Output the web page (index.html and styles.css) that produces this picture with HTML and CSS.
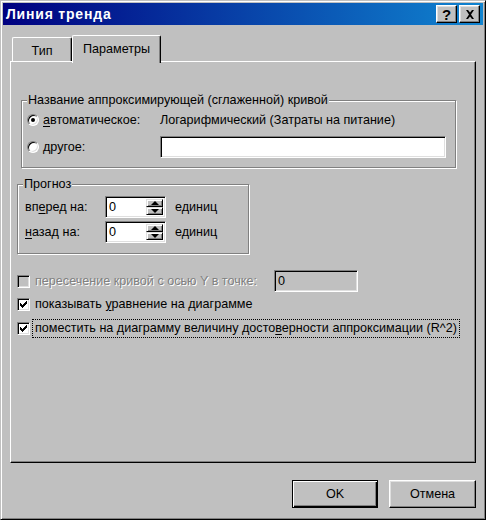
FILE: index.html
```html
<!DOCTYPE html>
<html lang="ru">
<head>
    <meta charset="UTF-8">
    <title>Линия тренда</title>
    <link rel="stylesheet" href="styles.css">
</head>
<body>
<div class="window">
    <div class="titlebar">
        <span class="title">Линия тренда</span>
        <div class="cap-buttons">
            <span class="cap-btn help">?</span>
            <span class="cap-btn">
                <svg width="10" height="9" viewBox="0 0 10 9"><path d="M1 0h2l2 2.5L7 0h2L6 4.5 9 9H7L5 6.5 3 9H1l3-4.5z" fill="#000"/></svg>
            </span>
        </div>
    </div>

    <div class="content">
        <div class="tabs">
            <div class="tab">Тип</div>
            <div class="tab active">Параметры</div>
        </div>

        <div class="panel">
            <fieldset class="group group-name">
                <legend>Название аппроксимирующей (сглаженной) кривой</legend>
                <div class="row">
                    <span class="radio checked"></span>
                    <span class="radio-label"><u>а</u>втоматическое:</span>
                    <span class="auto-name">Логарифмический (Затраты на питание)</span>
                </div>
                <div class="row">
                    <span class="radio"></span>
                    <span class="radio-label"><u>д</u>ругое:</span>
                    <span class="field name-field"></span>
                </div>
            </fieldset>

            <fieldset class="group group-forecast">
                <legend>Прогноз</legend>
                <div class="row">
                    <span class="spin-label">вп<u>е</u>ред на:</span>
                    <span class="spin">
                        <span class="spin-value">0</span>
                        <span class="spin-arrows">
                            <span class="arrow-btn"><span class="tri-up"></span></span>
                            <span class="arrow-btn"><span class="tri-down"></span></span>
                        </span>
                    </span>
                    <span class="units">единиц</span>
                </div>
                <div class="row">
                    <span class="spin-label"><u>н</u>азад на:</span>
                    <span class="spin">
                        <span class="spin-value">0</span>
                        <span class="spin-arrows">
                            <span class="arrow-btn"><span class="tri-up"></span></span>
                            <span class="arrow-btn"><span class="tri-down"></span></span>
                        </span>
                    </span>
                    <span class="units">единиц</span>
                </div>
            </fieldset>

            <div class="checks">
                <div class="check-row">
                    <span class="checkbox disabled"></span>
                    <span class="check-label disabled-text">пересечение кривой с осью Y в точке:</span>
                    <span class="field intercept">0</span>
                </div>
                <div class="check-row">
                    <span class="checkbox">
                        <svg width="7" height="7" viewBox="0 0 7 7"><path d="M0 2h1v3H0zM1 3h1v3H1zM2 4h1v3H2zM3 3h1v3H3zM4 2h1v3H4zM5 1h1v3H5zM6 0h1v3H6z" fill="#000"/></svg>
                    </span>
                    <span class="check-label">показывать <u>у</u>равнение на диаграмме</span>
                </div>
                <div class="check-row">
                    <span class="checkbox">
                        <svg width="7" height="7" viewBox="0 0 7 7"><path d="M0 2h1v3H0zM1 3h1v3H1zM2 4h1v3H2zM3 3h1v3H3zM4 2h1v3H4zM5 1h1v3H5zM6 0h1v3H6z" fill="#000"/></svg>
                    </span>
                    <span class="check-label focused">поместить на диаграмму величину досто<u>в</u>ерности аппроксимации (R^2)</span>
                </div>
            </div>
        </div>

        <div class="buttons">
            <span class="btn default">OK</span>
            <span class="btn">Отмена</span>
        </div>
    </div>
</div>
</body>
</html>
```

FILE: styles.css
```css
body {
    margin: 0;
    background: #c0c0c0;
    font-family: "Liberation Sans", Arial, sans-serif;
    font-size: 12.6px;
    color: #000;
}
u {
    text-underline-offset: 2px;
}
.window {
    width: 486px;
    height: 520px;
    box-sizing: border-box;
    border: 1px solid;
    border-color: #c0c0c0 #000 #000 #c0c0c0;
    box-shadow: inset 1px 1px #fff, inset -1px -1px #808080;
    padding: 2px;
    display: flex;
    flex-direction: column;
}

/* title bar */
.titlebar {
    height: 22px;
    flex: none;
    background: linear-gradient(to right, #000080, #1084d0);
    display: flex;
    align-items: center;
    justify-content: space-between;
    padding: 0 3px 0 3px;
}
.title {
    color: #fff;
    font-weight: bold;
    font-size: 14px;
    letter-spacing: 0.8px;
}
.cap-buttons {
    display: flex;
    gap: 2px;
}
.cap-btn {
    width: 21px;
    height: 18px;
    box-sizing: border-box;
    background: #c0c0c0;
    border: 1px solid;
    border-color: #fff #000 #000 #fff;
    box-shadow: inset -1px -1px #808080, inset 1px 1px #dfdfdf;
    display: flex;
    align-items: center;
    justify-content: center;
}
.cap-btn.help {
    font-weight: bold;
    font-size: 15px;
    line-height: 1;
}

/* body */
.content {
    flex: 1;
    padding: 10px 7px 0 7px;
    display: flex;
    flex-direction: column;
}
.tabs {
    display: flex;
    align-items: flex-end;
    height: 26px;
    padding-left: 2px;
    position: relative;
    z-index: 1;
}
.tab {
    height: 24px;
    box-sizing: border-box;
    width: 60px;
    border-top: 1px solid #fff;
    border-left: 1px solid #fff;
    border-right: 1px solid #000;
    border-radius: 2px 2px 0 0;
    box-shadow: inset -1px 0 #808080;
    background: #c0c0c0;
    display: flex;
    align-items: center;
    justify-content: center;
    padding-top: 3px;
}
.tab.active {
    width: 89px;
    height: 28px;
    margin-bottom: -2px;
    padding-top: 0;
    padding-bottom: 2px;
}
.panel {
    height: 402px;
    box-sizing: border-box;
    border: 1px solid;
    border-color: #fff #000 #000 #fff;
    box-shadow: inset -1px -1px #808080;
    padding: 0 6px;
}

/* group boxes */
.group {
    margin: 0;
    padding: 0;
    min-width: 0;
    border: 1px solid #808080;
    box-shadow: 1px 1px 0 #fff, inset 1px 1px 0 #fff;
    box-sizing: border-box;
}
.group legend {
    padding: 0 1px;
    margin-left: 0;
    line-height: 14px;
    background: #c0c0c0;
}
.group-name {
    width: 435px;
    margin: 31px 0 0 4px;
    padding: 2px 9px 9px 5px;
}
.group-forecast {
    width: 232px;
    margin: 9px 0 0 0;
    padding: 5px 0 10px 7px;
}
.group-forecast legend {
    margin-left: -2px;
}
.row {
    display: flex;
    align-items: center;
    height: 22px;
}
.group-name .row + .row {
    margin-top: 5px;
}
.group-forecast .row + .row {
    margin-top: 3px;
}

.radio {
    width: 12px;
    height: 12px;
    box-sizing: border-box;
    border-radius: 50%;
    border: 1px solid;
    border-color: #808080 #fff #fff #808080;
    box-shadow: inset 1px 1px #000, inset -1px -1px #dfdfdf;
    background: #fff;
    position: relative;
    flex: none;
}
.radio.checked::after {
    content: "";
    position: absolute;
    left: 3px;
    top: 3px;
    width: 4px;
    height: 4px;
    border-radius: 50%;
    background: #000;
}
.radio-label {
    margin-left: 4px;
    width: 117px;
}
.field {
    height: 22px;
    box-sizing: border-box;
    border: 1px solid;
    border-color: #808080 #fff #fff #808080;
    box-shadow: inset 1px 1px #000, inset -1px -1px #dfdfdf;
    background: #fff;
    padding: 3px 3px 0;
}
.name-field {
    width: 286px;
}

/* spin boxes */
.spin-label {
    width: 80px;
}
.spin {
    width: 61px;
    height: 22px;
    box-sizing: border-box;
    border: 1px solid;
    border-color: #808080 #fff #fff #808080;
    box-shadow: inset 1px 1px #000, inset -1px -1px #dfdfdf;
    background: #fff;
    padding: 2px;
    display: flex;
}
.spin-value {
    flex: 1;
    padding: 1px 0 0 1px;
}
.spin-arrows {
    display: flex;
    flex-direction: column;
    width: 17px;
}
.arrow-btn {
    flex: 1;
    box-sizing: border-box;
    background: #c0c0c0;
    border: 1px solid;
    border-color: #dfdfdf #000 #000 #dfdfdf;
    box-shadow: inset 1px 1px #fff, inset -1px -1px #808080;
    display: flex;
    align-items: center;
    justify-content: center;
}
.tri-up {
    border: 4px solid transparent;
    border-bottom: 4px solid #000;
    border-top: 0;
}
.tri-down {
    border: 4px solid transparent;
    border-top: 4px solid #000;
    border-bottom: 0;
}
.units {
    margin-left: 9px;
}

/* check boxes */
.checks {
    margin-top: 16px;
}
.check-row {
    display: flex;
    align-items: center;
    height: 22px;
    white-space: nowrap;
}
.check-row + .check-row {
    margin-top: 1px;
}
.check-row:last-child {
    margin-top: 2px;
}
.checkbox {
    width: 13px;
    height: 13px;
    box-sizing: border-box;
    border: 1px solid;
    border-color: #808080 #fff #fff #808080;
    box-shadow: inset 1px 1px #000, inset -1px -1px #dfdfdf;
    background: #fff;
    display: flex;
    align-items: center;
    justify-content: center;
    flex: none;
}
.checkbox.disabled {
    background: #c0c0c0;
}
.check-label {
    margin-left: 5px;
}
.disabled-text {
    width: 239px;
    color: #808080;
    text-shadow: 1px 1px 0 #fff;
}
.focused {
    margin-left: 2px;
    padding: 1px 2px 2px 2px;
    border: 1px dotted #000;
}
.intercept {
    width: 84px;
    margin-left: 0;
    background: #c0c0c0;
    padding-left: 3px;
}

/* dialog buttons */
.buttons {
    display: flex;
    justify-content: flex-end;
    gap: 11px;
    margin-top: 17px;
}
.btn {
    width: 87px;
    height: 28px;
    box-sizing: border-box;
    border: 1px solid;
    border-color: #fff #000 #000 #fff;
    box-shadow: inset -1px -1px #808080, inset 1px 1px #dfdfdf;
    display: flex;
    align-items: center;
    justify-content: center;
}
.btn.default {
    width: 86px;
    border: 1px solid #000;
    box-shadow: inset 1px 1px #fff, inset -1px -1px #000, inset -2px -2px #808080;
}
```
